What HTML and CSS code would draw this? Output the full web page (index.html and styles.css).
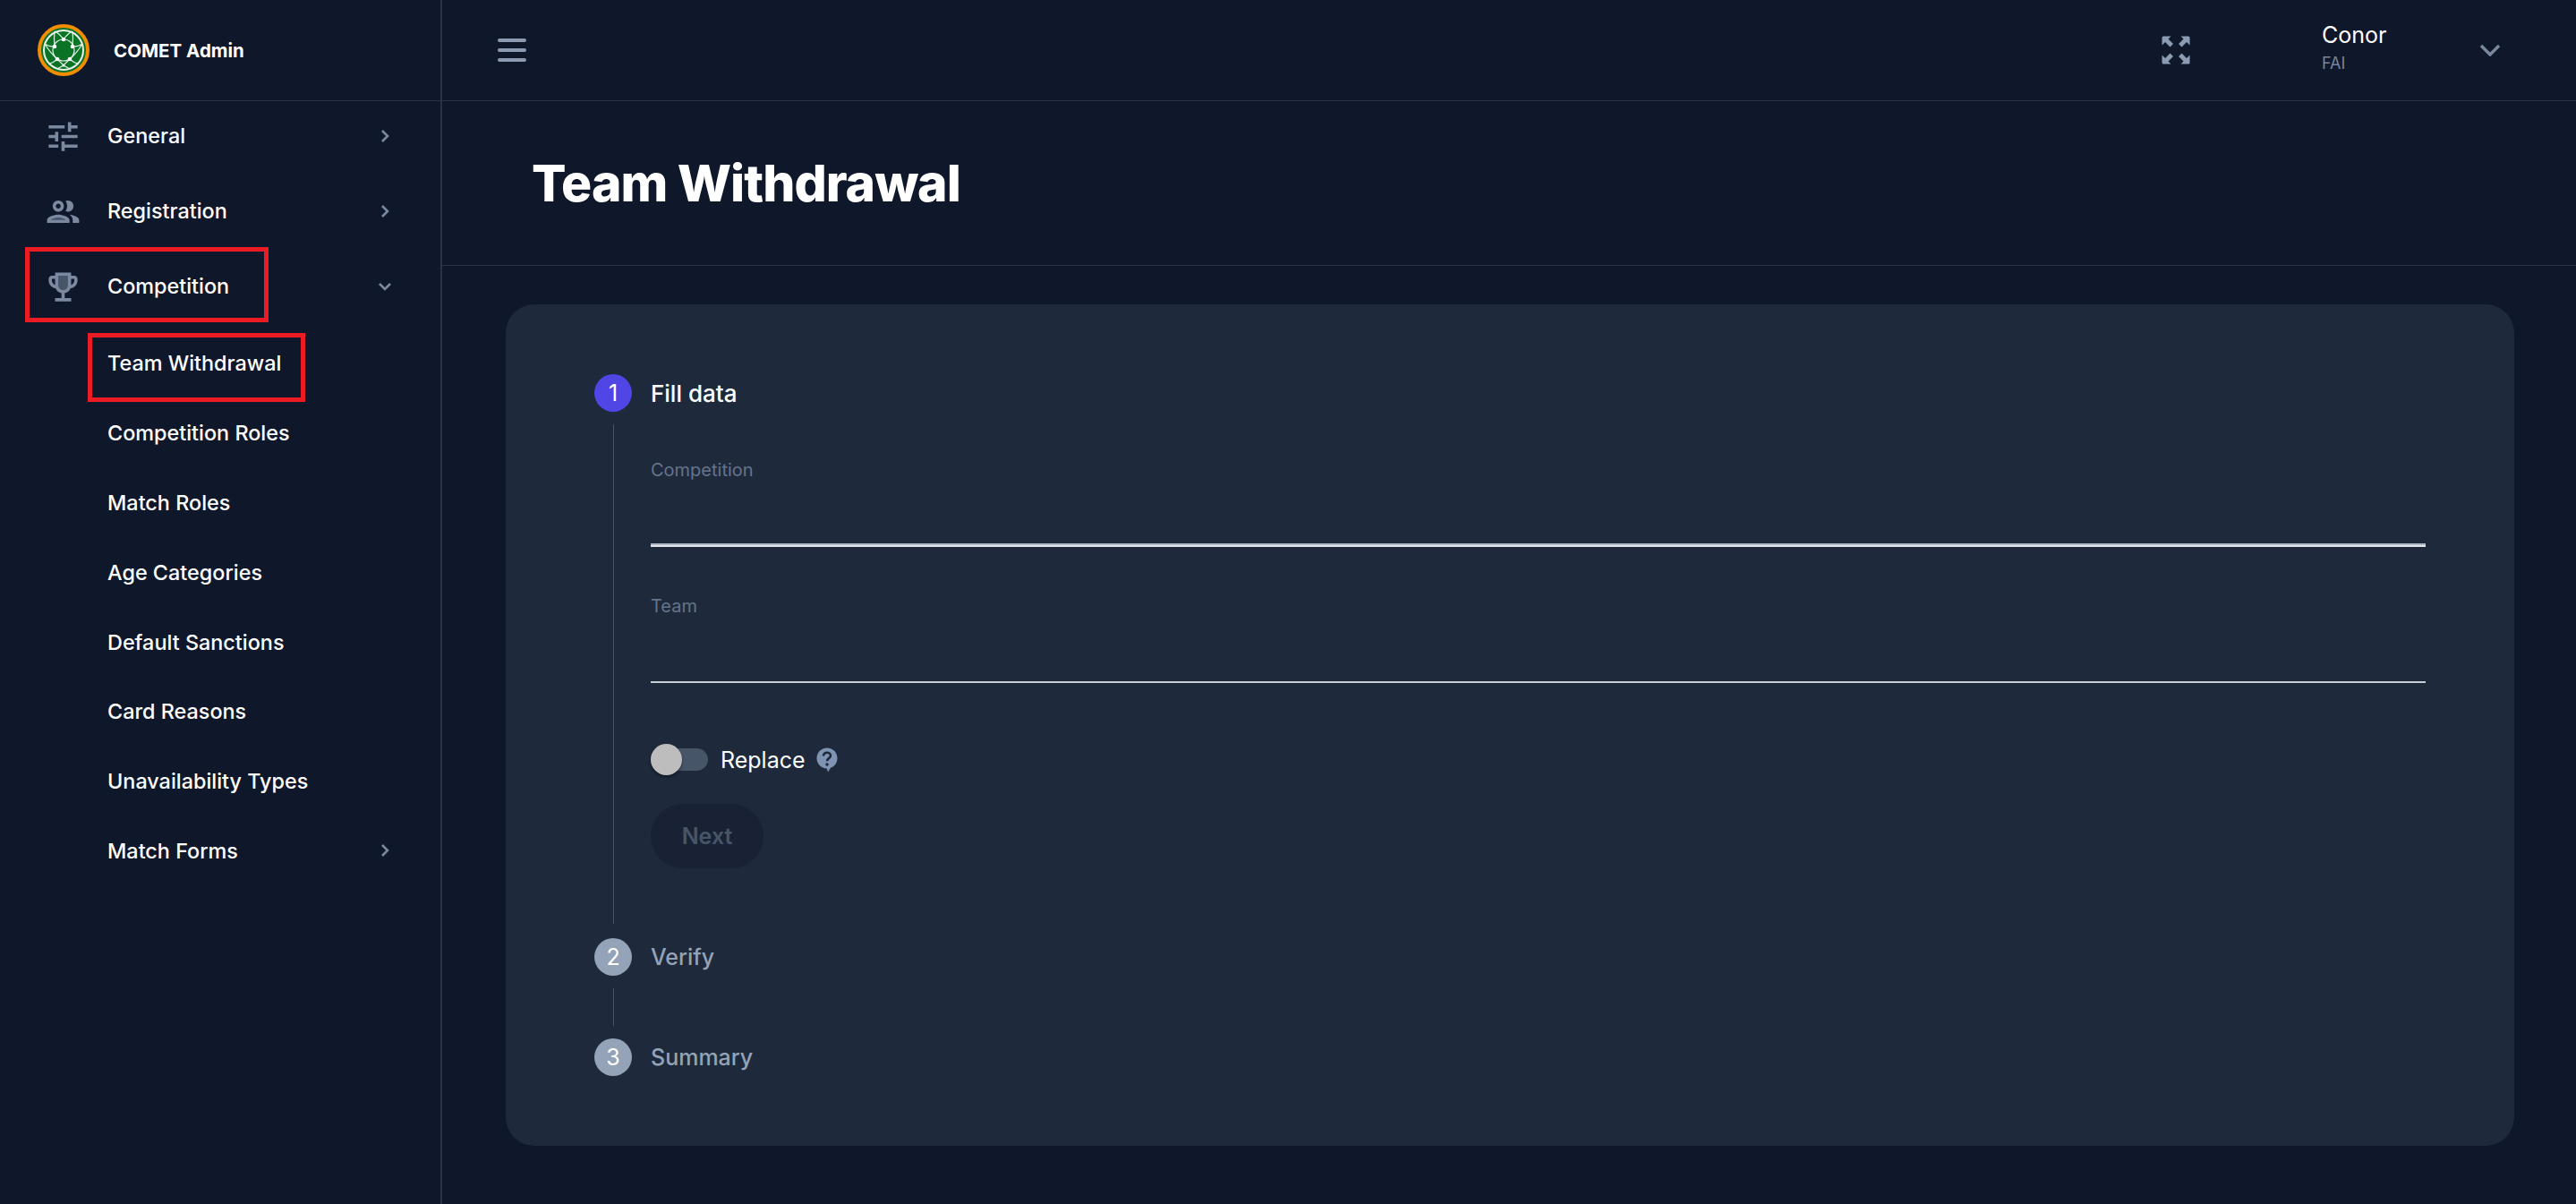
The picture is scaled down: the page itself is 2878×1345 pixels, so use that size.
FILE: index.html
```html
<!DOCTYPE html>
<html>
<head>
<meta charset="utf-8">
<title>Team Withdrawal</title>
<link rel="stylesheet" href="styles.css">
</head>
<body>
<div class="app">
	<aside class="sidebar">
		<div class="brand">
			<svg class="logo" viewBox="0 0 58 58">
				<circle cx="29" cy="29" r="27" fill="#0a7326" stroke="#f28c00" stroke-width="4"/>
				<g fill="none" stroke="#e8f3ea" stroke-width="1.2">
					<circle cx="29" cy="29" r="22" stroke-width="2"/>
					<circle cx="29" cy="29" r="12"/>
					<path d="M29 17 Q24 10 19 8 M29 17 Q34 10 39 8 M19 25 Q18 16 19 8 M39 25 Q40 16 39 8 M19 25 Q12 25 8 22 M39 25 Q46 25 50 22 M22 39 Q14 32 8 22 M36 39 Q44 32 50 22 M22 39 Q16 44 13 44 M36 39 Q42 44 45 44 M22 39 L29 46 L36 39 M29 46 L22 50 M29 46 L36 50"/>
				</g>
				<g fill="#fff">
					<circle cx="29" cy="17" r="2.300"/><circle cx="19" cy="25" r="2.300"/><circle cx="39" cy="25" r="2.300"/>
					<circle cx="22" cy="39" r="2.300"/><circle cx="36" cy="39" r="2.300"/><circle cx="29" cy="46" r="1.500"/>
				</g>
			</svg>
			<span class="brand-name">COMET Admin</span>
		</div>
		<nav class="nav">
			<a class="nav-item">
				<svg class="nav-icon" viewBox="0 0 24 24"><path d="M3 17v2h6v-2H3zM3 5v2h10V5H3zm10 16v-2h8v-2h-8v-2h-2v6h2zM7 9v2H3v2h4v2h2V9H7zm14 4v-2H11v2h10zm-6-4h2V7h4V5h-4V3h-2v6z"/></svg>
				<span class="nav-label">General</span>
				<svg class="chev" viewBox="0 0 12 16"><path d="M3 2l6 6-6 6"/></svg>
			</a>
			<a class="nav-item">
				<svg class="nav-icon" viewBox="0 0 24 24"><path class="soft" d="M4.34 17c.84-.58 2.87-1.25 4.66-1.25s3.82.67 4.66 1.25H4.34z"/><path d="M9 13.75c-2.34 0-7 1.17-7 3.5V19h14v-1.75c0-2.33-4.66-3.5-7-3.5zM4.34 17c.84-.58 2.87-1.25 4.66-1.25s3.82.67 4.66 1.25H4.34zM9 12c1.93 0 3.5-1.57 3.5-3.5S10.93 5 9 5 5.5 6.57 5.5 8.5 7.07 12 9 12zm0-5c.83 0 1.5.67 1.5 1.5S9.83 10 9 10s-1.5-.67-1.5-1.5S8.17 7 9 7zm7.04 6.81c1.16.84 1.96 1.96 1.96 3.44V19h4v-1.75c0-2.02-3.5-3.17-5.96-3.44zM15 12c1.93 0 3.5-1.57 3.5-3.5S16.93 5 15 5c-.54 0-1.04.13-1.5.35.63.89 1 1.98 1 3.15s-.37 2.26-1 3.15c.46.22.96.35 1.5.35z"/></svg>
				<span class="nav-label">Registration</span>
				<svg class="chev" viewBox="0 0 12 16"><path d="M3 2l6 6-6 6"/></svg>
			</a>
			<a class="nav-item">
				<svg class="nav-icon" viewBox="0 0 24 24"><path d="M19 5h-2V3H7v2H5c-1.1 0-2 .9-2 2v1c0 2.55 1.92 4.63 4.39 4.94.63 1.5 1.98 2.63 3.61 2.96V19H7v2h10v-2h-4v-3.1c1.63-.33 2.98-1.46 3.61-2.96C19.08 12.63 21 10.55 21 8V7c0-1.1-.9-2-2-2zM5 8V7h2v3.82C5.84 10.4 5 9.3 5 8zm14 0c0 1.3-.84 2.4-2 2.82V7h2v1z"/><path class="soft" d="M12 14c-1.65 0-3-1.35-3-3V5h6v6c0 1.65-1.35 3-3 3z"/></svg>
				<span class="nav-label">Competition</span>
				<svg class="chev-down" viewBox="0 0 16 12"><path d="M2 3l6 6 6-6"/></svg>
			</a>
			<div class="sub-nav">
				<a class="sub-item">Team Withdrawal</a>
				<a class="sub-item">Competition Roles</a>
				<a class="sub-item">Match Roles</a>
				<a class="sub-item">Age Categories</a>
				<a class="sub-item">Default Sanctions</a>
				<a class="sub-item">Card Reasons</a>
				<a class="sub-item">Unavailability Types</a>
				<a class="sub-item">Match Forms
					<svg class="chev" viewBox="0 0 12 16"><path d="M3 2l6 6-6 6"/></svg>
				</a>
			</div>
		</nav>
		<div class="mark mark-competition"></div>
		<div class="mark mark-team"></div>
	</aside>

	<main class="main">
		<header class="topbar">
			<div class="burger"><span></span><span></span><span></span></div>
			<svg class="expand" viewBox="0 0 32 32">
				<path d="M0.500 2a1.500 1.500 0 0 1 1.500-1.500H10.500L7.500 3.500l5.500 5.500-3.500 3.500-5.500-5.500-3.500 3.500z"/>
				<path transform="matrix(-1 0 0 1 32 0)" d="M0.500 2a1.500 1.500 0 0 1 1.500-1.500H10.500L7.500 3.500l5.500 5.500-3.500 3.500-5.500-5.500-3.500 3.500z"/>
				<path transform="matrix(1 0 0 -1 0 32)" d="M0.500 2a1.500 1.500 0 0 1 1.500-1.500H10.500L7.500 3.500l5.500 5.500-3.500 3.500-5.500-5.500-3.500 3.500z"/>
				<path transform="matrix(-1 0 0 -1 32 32)" d="M0.500 2a1.500 1.500 0 0 1 1.500-1.500H10.500L7.500 3.500l5.500 5.500-3.500 3.500-5.500-5.500-3.500 3.500z"/>
			</svg>
			<div class="user">
				<div class="user-name">Conor</div>
				<div class="user-org">FAI</div>
			</div>
			<svg class="user-chev" viewBox="0 0 24 14"><path d="M2 2l10 10L22 2"/></svg>
		</header>
		<div class="page-head">
			<h1>Team Withdrawal</h1>
		</div>
		<section class="card">
			<div class="step-head">
				<span class="step-num active">1</span>
				<span class="step-title active">Fill data</span>
			</div>
			<div class="step-body first">
				<div class="field">
					<label>Competition</label>
					<div class="input focus"></div>
				</div>
				<div class="field">
					<label>Team</label>
					<div class="input"></div>
				</div>
				<div class="toggle-row">
					<span class="toggle"><span class="thumb"></span></span>
					<span class="toggle-label">Replace</span>
					<svg class="help" viewBox="0 0 24 28">
						<path d="M12 0.5C5.6 0.5 0.5 5.6 0.5 12c0 6.2 5 11.3 11.2 11.5l1.3 4 3-4.8C20.600 21.300 23.500 17 23.500 12 23.500 5.600 18.400 0.500 12 0.500z"/>
						<path class="mark-q" d="M8 9.500c0-2.300 1.800-3.800 4-3.800s4 1.400 4 3.500c0 2.900-4 3-4 6"/>
						<circle cx="12" cy="19" r="1.700"/>
					</svg>
				</div>
				<button class="next" type="button">Next</button>
			</div>
			<div class="step-head">
				<span class="step-num">2</span>
				<span class="step-title dim">Verify</span>
			</div>
			<div class="step-body"></div>
			<div class="step-head">
				<span class="step-num">3</span>
				<span class="step-title dim">Summary</span>
			</div>
		</section>
	</main>
</div>
</body>
</html>
```

FILE: styles.css
```css
*{margin: 0;padding: 0;box-sizing: border-box;}
html,body{
	height: 100%;
	overflow: hidden;
}
body{
	font-family: "Inter", "Liberation Sans", sans-serif;
	color: #fff;
	background: #0f172a;
}
.app{
	display: grid;
	grid-template-columns: 494px 1fr;
	height: 100%;
}

/* sidebar */
.sidebar{
	position: relative;
	border-right: 2px solid #293345;
}
.brand{
	display: flex;
	align-items: center;
	height: 113px;
	padding-left: 42px;
	border-bottom: 1px solid #293345;
}
.logo{
	width: 58px;
	height: 58px;
	flex: none;
}
.brand-name{
	margin-left: 27px;
	font-size: 20.5px;
	font-weight: 700;
}
.nav-item{
	display: flex;
	align-items: center;
	height: 78px;
	margin-bottom: 6px;
	padding-left: 49px;
}
.nav-icon{
	width: 43px;
	height: 43px;
	flex: none;
	fill: #7a89a0;
}
.nav-icon .soft{
	fill: #475569;
}
.nav-label{
	margin: -2px 0 0 28px;
	font-size: 23.4px;
	font-weight: 500;
}
.chev,.chev-down{
	fill: none;
	stroke: #7a89a0;
	stroke-width: 2.6;
	margin-left: auto;
	flex: none;
}
.chev{
	width: 12px;
	height: 16px;
	margin-right: 56px;
}
.chev-down{
	width: 16px;
	height: 12px;
	margin-right: 54px;
}
.sub-item{
	display: flex;
	align-items: center;
	height: 77.8px;
	padding: 4px 0 0 120px;
	font-size: 23.4px;
	font-weight: 500;
}
.mark{
	position: absolute;
	border: 5px solid #ed1c24;
}
.mark-competition{
	left: 28px;
	top: 276px;
	width: 272px;
	height: 84px;
}
.mark-team{
	left: 98px;
	top: 372px;
	width: 243px;
	height: 77px;
}

/* top */
.topbar{
	display: flex;
	align-items: center;
	height: 113px;
	padding-left: 62px;
	border-bottom: 1px solid #293345;
}
.burger{
	display: flex;
	flex-direction: column;
	gap: 7px;
	width: 32px;
}
.burger span{
	height: 4px;
	border-radius: 2px;
	background: #8c9bb2;
}
.expand{
	width: 32px;
	height: 32px;
	margin-left: auto;
	fill: #8c9bb2;
}
.user{
	width: 176px;
	margin: -9px 0 0 147px;
}
.user-name{
	font-size: 25px;
	line-height: 34px;
}
.user-org{
	margin-top: 4px;
	font-size: 18px;
	line-height: 22px;
	color: #78849a;
}
.user-chev{
	width: 24px;
	height: 14px;
	margin-right: 84px;
	fill: none;
	stroke: #78899f;
	stroke-width: 3.4;
}
.page-head{
	display: flex;
	align-items: center;
	height: 184px;
	padding-left: 100px;
	border-bottom: 1px solid #293345;
}
h1{
	font-size: 57px;
	font-weight: 800;
	letter-spacing: -1px;
}

/* stepper card */
.card{
	width: 2244px;
	height: 940px;
	margin: 43px 0 0 71px;
	padding: 78px 99px 0;
	border-radius: 32px;
	background: #1e293b;
}
.step-head{
	display: flex;
	align-items: center;
	gap: 21px;
	height: 42px;
}
.step-num{
	display: flex;
	align-items: center;
	justify-content: center;
	width: 42px;
	height: 42px;
	border-radius: 50%;
	font-size: 25px;
	background: #94a3b8;
}
.step-num.active{
	background: #4f46e5;
}
.step-title{
	font-size: 26px;
	font-weight: 500;
	color: #94a3b8;
}
.step-title.active{
	color: #fff;
}
.step-title.dim{
	font-size: 25px;
}
.step-body{
	height: 42px;
	margin: 14px 0 14px 21px;
	padding-left: 41px;
	border-left: 1px solid #475569;
}
.step-body.first{
	height: 558px;
	margin-bottom: 16px;
	padding-top: 38px;
}
.field{
	margin-bottom: 53px;
}
.field label{
	display: block;
	font-size: 20px;
	line-height: 26px;
	color: #64748b;
}
.input{
	height: 73px;
	border-bottom: 2px solid #c8ced6;
}
.input.focus{
	border-bottom-color: #e2e6ea;
	box-shadow: inset 0 -2px 0 #aeb7c2;
}
.toggle-row{
	display: flex;
	align-items: center;
	height: 35px;
	margin-top: 68px;
}
.toggle{
	position: relative;
	width: 64px;
	height: 25px;
	border-radius: 13px;
	background: #475569;
}
.thumb{
	position: absolute;
	left: 0;
	top: -5px;
	width: 35px;
	height: 35px;
	border-radius: 50%;
	background: #bdbdbd;
	box-shadow: 0 2px 3px rgba(0,0,0,.4);
}
.toggle-label{
	margin-left: 14px;
	font-size: 25px;
}
.help{
	width: 24px;
	height: 28px;
	margin-left: 12px;
	fill: #7f93b2;
}
.help .mark-q{
	fill: none;
	stroke: #1e293b;
	stroke-width: 2.6;
}
.help circle{
	fill: #1e293b;
}
.next{
	display: block;
	width: 126px;
	height: 72px;
	margin-top: 32px;
	border: 0;
	border-radius: 36px;
	font: 600 25px "Inter", "Liberation Sans", sans-serif;
	color: #475569;
	background: #192235;
}
```
